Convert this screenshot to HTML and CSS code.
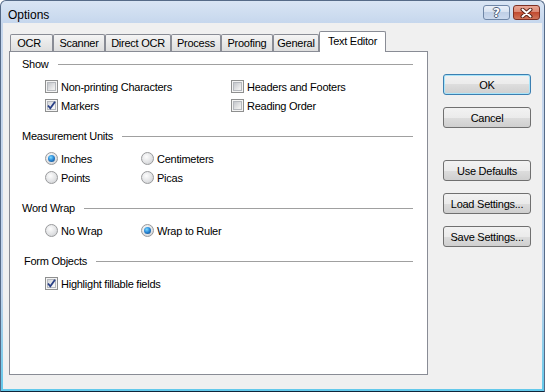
FILE: index.html
```html
<!DOCTYPE html>
<html lang="en">

<head>
    <meta charset="UTF-8">
    <meta name="viewport" content="width=device-width, initial-scale=1.0">
    <title>Options</title>
    <link rel="stylesheet" href="styles.css">
</head>

<body>
    <div class="window">
        <!-- Title bar -->
        <div class="titlebar">
            <span class="title">Options</span>
            <div class="caption-buttons">
                <button class="cap-btn help">?</button>
                <button class="cap-btn close">
                    <svg width="15" height="10" viewBox="0 0 15 10">
                        <path d="M3.5 1.5 L11.5 8.5 M11.5 1.5 L3.5 8.5" stroke="#5a2418" stroke-width="4" stroke-linecap="round" />
                        <path d="M3.5 1.5 L11.5 8.5 M11.5 1.5 L3.5 8.5" stroke="#ffffff" stroke-width="2" stroke-linecap="round" />
                    </svg>
                </button>
            </div>
        </div>

        <div class="client">
            <!-- Tabs -->
            <div class="tabs">
                <div class="tab-strip">
                    <div class="tab tab-ocr">OCR</div>
                    <div class="tab tab-scanner">Scanner</div>
                    <div class="tab tab-direct">Direct OCR</div>
                    <div class="tab tab-process">Process</div>
                    <div class="tab tab-proofing">Proofing</div>
                    <div class="tab tab-general">General</div>
                    <div class="tab tab-editor active">Text Editor</div>
                </div>

                <div class="tab-page">
                    <div class="group">
                        <div class="group-title">Show</div>
                        <div class="options cols-show">
                            <label class="option"><span class="check"></span>Non-printing Characters</label>
                            <label class="option"><span class="check"></span>Headers and Footers</label>
                            <label class="option"><span class="check checked"><svg width="11" height="11" viewBox="0 0 11 11"><path d="M2 5.5 L4.3 8.3 L9 1.8" fill="none" stroke="#283f85" stroke-width="1.8" /></svg></span>Markers</label>
                            <label class="option"><span class="check"></span>Reading Order</label>
                        </div>
                    </div>

                    <div class="group">
                        <div class="group-title">Measurement Units</div>
                        <div class="options cols-units">
                            <label class="option"><span class="radio checked"></span>Inches</label>
                            <label class="option"><span class="radio"></span>Centimeters</label>
                            <label class="option"><span class="radio"></span>Points</label>
                            <label class="option"><span class="radio"></span>Picas</label>
                        </div>
                    </div>

                    <div class="group">
                        <div class="group-title">Word Wrap</div>
                        <div class="options cols-units">
                            <label class="option"><span class="radio"></span>No Wrap</label>
                            <label class="option"><span class="radio checked"></span>Wrap to Ruler</label>
                        </div>
                    </div>

                    <div class="group">
                        <div class="group-title indent">Form Objects</div>
                        <div class="options">
                            <label class="option"><span class="check checked"><svg width="11" height="11" viewBox="0 0 11 11"><path d="M2 5.5 L4.3 8.3 L9 1.8" fill="none" stroke="#283f85" stroke-width="1.8" /></svg></span>Highlight fillable fields</label>
                        </div>
                    </div>
                </div>
            </div>

            <!-- Dialog buttons -->
            <div class="actions">
                <button class="btn btn-default">OK</button>
                <button class="btn">Cancel</button>
                <button class="btn spaced">Use Defaults</button>
                <button class="btn">Load Settings...</button>
                <button class="btn">Save Settings...</button>
            </div>
        </div>
    </div>
</body>

</html>
```

FILE: styles.css
```css
* {
    margin: 0;
    padding: 0;
    box-sizing: border-box;
}

body {
    width: 545px;
    height: 392px;
    overflow: hidden;
    font-family: 'Liberation Sans', Arial, sans-serif;
    font-size: 11px;
    letter-spacing: -0.25px;
    color: #000;
    background-color: #fff;
}

.window {
    width: 545px;
    height: 392px;
    display: flex;
    flex-direction: column;
    border: 1px solid #566b88;
    border-bottom-color: #10253a;
    border-radius: 6px 6px 0 0;
    padding: 0 2px 2px;
    background: linear-gradient(#d9e5f4, #c6d7ed 22px, #bfd2ea 75%, #62c9eb);
}

/* Title bar */
.titlebar {
    height: 22px;
    display: flex;
    justify-content: space-between;
    align-items: flex-start;
    padding-left: 5px;
}

.title {
    font-size: 12px;
    line-height: 12px;
    letter-spacing: 0;
    margin-top: 8px;
}

.caption-buttons {
    display: flex;
    gap: 3px;
    margin-top: 4px;
    margin-right: 2px;
}

.cap-btn {
    width: 27px;
    height: 15px;
    border-radius: 3px;
    display: flex;
    align-items: center;
    justify-content: center;
}

.help {
    border: 1px solid #6f86a6;
    background: linear-gradient(#eaf0f9, #d6e1f0 50%, #bfcfe6 50%, #cbd9ee);
    color: #ffffff;
    font-family: 'DejaVu Sans', sans-serif;
    font-weight: bold;
    font-size: 12px;
    line-height: 12px;
    text-shadow: 1px 0 0 #4a5d78, -1px 0 0 #4a5d78, 0 1px 0 #4a5d78, 0 -1px 0 #4a5d78;
}

.close {
    border: 1px solid #7d3024;
    background: linear-gradient(#eaa796, #d98570 50%, #c24b31 50%, #d0745a);
}

/* Client area */
.client {
    flex: 1;
    display: flex;
    gap: 15px;
    background-color: #f0f0f0;
    padding: 8px 11px 14px 6px;
}

.tabs {
    width: 419px;
    display: flex;
    flex-direction: column;
}

.tab-strip {
    height: 20px;
    display: flex;
    align-items: flex-end;
    padding-left: 1px;
}

.tab {
    height: 17px;
    display: flex;
    align-items: center;
    justify-content: center;
    border: 1px solid #898c95;
    border-bottom: none;
    border-radius: 2px 2px 0 0;
    background: linear-gradient(#f5f5f5, #e9e9e9 50%, #dedede);
    white-space: nowrap;
}

.tab-ocr { width: 43px; padding-right: 5px; }
.tab-scanner { width: 52px; }
.tab-direct { width: 66px; }
.tab-process { width: 50px; }
.tab-proofing { width: 52px; }
.tab-general { width: 46px; }
.tab-editor { width: 67px; }

.tab.active {
    height: 21px;
    margin-bottom: -1px;
    padding-bottom: 2px;
    position: relative;
    z-index: 1;
    background: #fff;
}

.tab-page {
    flex: 1;
    background-color: #fff;
    border: 1px solid #898c95;
    padding: 4px 14px 0 12px;
}

/* Groups */
.group + .group {
    margin-top: 13px;
}

.group-title {
    height: 16px;
    display: flex;
    align-items: center;
    margin-bottom: 5px;
}

.group-title::after {
    content: "";
    flex: 1;
    height: 1px;
    margin-left: 9px;
    background-color: #a0a0a0;
}

.group-title.indent {
    padding-left: 2px;
}

.options {
    display: grid;
    grid-template-columns: 1fr;
    padding-left: 23px;
}

.options.cols-show {
    grid-template-columns: 186px 1fr;
}

.options.cols-units {
    grid-template-columns: 96px 1fr;
}

.option {
    height: 19px;
    display: flex;
    align-items: center;
    gap: 3px;
    white-space: nowrap;
}

/* Checkboxes */
.check {
    flex: none;
    width: 13px;
    height: 13px;
    border: 1px solid #8e8f8f;
    background-color: #f4f4f4;
    position: relative;
}

.check::before {
    content: "";
    position: absolute;
    inset: 1px;
    background: linear-gradient(135deg, #c3c6cb, #eeeeee 80%);
    border: 1px solid #b5b8bd;
}

.check.checked::before {
    background: linear-gradient(135deg, #d2d5da, #f6f6f6 80%);
}

.check svg {
    position: absolute;
    left: 0;
    top: 0;
    z-index: 1;
}

/* Radio buttons */
.radio {
    flex: none;
    width: 13px;
    height: 13px;
    border-radius: 50%;
    border: 1px solid #999a9c;
    background: radial-gradient(circle at 40% 35%, #fdfdfd, #e2e3e5 55%, #c7c9cc);
    display: flex;
    align-items: center;
    justify-content: center;
}

.radio.checked::after {
    content: "";
    width: 7px;
    height: 7px;
    border-radius: 50%;
    background: radial-gradient(circle at 40% 35%, #7fdcff, #2b8ad8 45%, #0f3e77);
}

/* Dialog buttons */
.actions {
    width: 88px;
    display: flex;
    flex-direction: column;
    gap: 12px;
    padding-top: 43px;
}

.btn {
    height: 21px;
    width: 88px;
    border: 1px solid #707070;
    border-radius: 3px;
    background: linear-gradient(#f2f2f2, #ebebeb 50%, #dddddd 50%, #cfcfcf);
    font-family: inherit;
    font-size: 11px;
    letter-spacing: -0.25px;
    color: #000;
}

.btn-default {
    border-color: #3c7fb1;
    box-shadow: inset 0 0 0 1px #a8e4f9;
}

.btn.spaced {
    margin-top: 20px;
}
```
